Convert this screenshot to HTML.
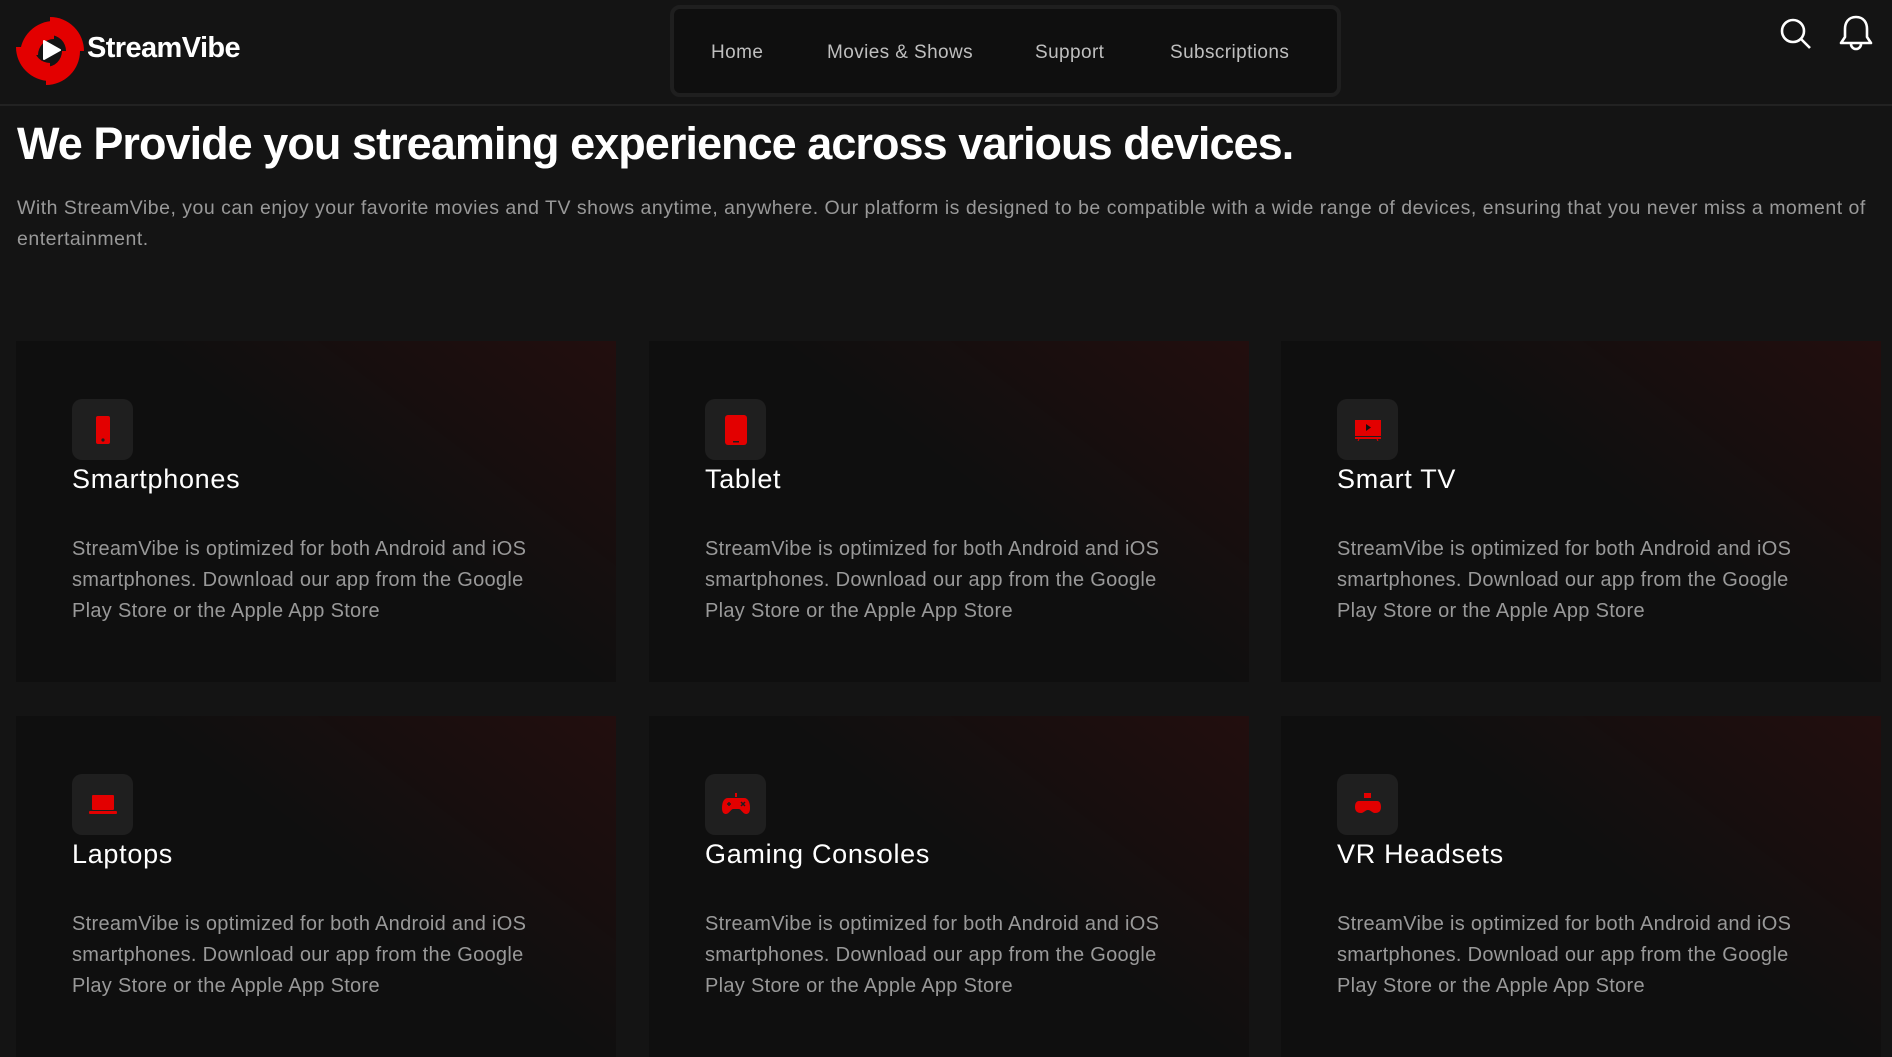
<!DOCTYPE html>
<html><head><meta charset="utf-8"><style>
*{margin:0;padding:0;box-sizing:border-box}
body{width:1892px;height:926px;overflow:hidden;background:#141414;font-family:"Liberation Sans",sans-serif;color:#fff;position:relative}
header{position:absolute;left:0;top:0;width:1892px;height:106px;border-bottom:2px solid #222}
.logo{position:absolute;left:16px;top:17px}
.brand{position:absolute;left:87px;top:32px;font-size:29px;font-weight:bold;letter-spacing:-0.6px}
nav{position:absolute;left:670px;top:5px;width:671px;height:92px;background:#0f0f0f;border:4px solid #1f1f1f;border-radius:10px}
nav span{position:absolute;top:33px;font-size:19px;color:#bfbfbf;letter-spacing:0.4px}
.ic{position:absolute}
h1{position:absolute;left:17px;top:118px;font-size:45px;font-weight:bold;letter-spacing:-0.95px;white-space:nowrap}
p.lead{position:absolute;left:17px;top:193px;width:1872px;font-size:19.5px;line-height:31px;color:#999;letter-spacing:0.5px}
.card{position:absolute;width:600px;height:341px;background:linear-gradient(217deg,rgba(229,0,0,0.09) 0%,rgba(15,15,15,0) 45%),#0f0f0f}
.box{position:absolute;left:56px;top:58px;width:61px;height:61px;background:#1f1f1f;border-radius:10px;display:flex;align-items:center;justify-content:center}
.card h3{position:absolute;left:56px;top:123px;font-size:27px;font-weight:normal;letter-spacing:0.7px}
.card p{position:absolute;left:56px;top:193px;width:490px;font-size:20px;line-height:31px;color:#999;letter-spacing:0.3px}
</style></head><body>
<header>
<svg class="logo" width="68" height="68" viewBox="0 0 68 68">
<path d="M34 0 A34 34 0 0 1 68 34 L50 34 A16 16 0 0 0 34 18 Z" fill="#e30000"/>
<path d="M68 34 A34 34 0 0 1 34 68 L34 50 A16 16 0 0 0 50 34 Z" fill="#e30000" transform="translate(-4,0)"/>
<path d="M34 68 A34 34 0 0 1 0 34 L18 34 A16 16 0 0 0 34 50 Z" fill="#e30000" transform="translate(0,-4)"/>
<path d="M0 34 A34 34 0 0 1 34 0 L34 18 A16 16 0 0 0 18 34 Z" fill="#e30000" transform="translate(4,4)"/>
<path d="M28 24 L44 33 L28 42 Z" fill="#fff" stroke="#fff" stroke-width="2" stroke-linejoin="round"/>
</svg>
<div class="brand">StreamVibe</div>
<nav><span style="left:37px">Home</span><span style="left:153px">Movies &amp; Shows</span><span style="left:361px">Support</span><span style="left:496px">Subscriptions</span></nav>
<svg class="ic" style="left:1778px;top:16px" width="36" height="36" viewBox="0 0 36 36" fill="none" stroke="#fff" stroke-width="2.6"><circle cx="15" cy="15" r="11"/><path d="M23 23 L32 32"/></svg>
<svg class="ic" style="left:1836px;top:13px" width="40" height="40" viewBox="0 0 40 40" fill="none" stroke="#fff" stroke-width="2.6" stroke-linejoin="round"><path d="M20 4 C12 4 9 10 9 16 L9 24 L5 30 L35 30 L31 24 L31 16 C31 10 28 4 20 4 Z"/><path d="M15 31 A5 5 0 0 0 25 31"/></svg>
</header>
<h1>We Provide you streaming experience across various devices.</h1>
<p class="lead">With StreamVibe, you can enjoy your favorite movies and TV shows anytime, anywhere. Our platform is designed to be compatible with a wide range of devices, ensuring that you never miss a moment of entertainment.</p>

<div class="card" style="left:16px;top:341px"><div class="box"><svg width="16" height="28" viewBox="0 0 16 28"><rect x="1" y="0" width="14" height="28" rx="2" fill="#e30000"/><circle cx="8" cy="24" r="1.6" fill="#1f1f1f"/></svg></div><h3>Smartphones</h3><p>StreamVibe is optimized for both Android and iOS smartphones. Download our app from the Google Play Store or the Apple App Store</p></div>
<div class="card" style="left:649px;top:341px"><div class="box"><svg width="24" height="30" viewBox="0 0 24 30"><rect x="1" y="0" width="22" height="30" rx="3" fill="#e30000"/><rect x="9" y="26" width="6" height="1.5" fill="#1f1f1f"/></svg></div><h3>Tablet</h3><p>StreamVibe is optimized for both Android and iOS smartphones. Download our app from the Google Play Store or the Apple App Store</p></div>
<div class="card" style="left:1281px;top:341px"><div class="box"><svg width="28" height="22" viewBox="0 0 28 22"><rect x="1" y="1" width="26" height="16" fill="#e30000"/><path d="M12 5 L17 8.5 L12 12Z" fill="#111"/><rect x="1" y="18" width="26" height="2" fill="#e30000"/><path d="M5 20 L4 22 M23 20 L24 22" stroke="#e30000"/></svg></div><h3>Smart TV</h3><p>StreamVibe is optimized for both Android and iOS smartphones. Download our app from the Google Play Store or the Apple App Store</p></div>

<div class="card" style="left:16px;top:716px"><div class="box"><svg width="30" height="22" viewBox="0 0 30 22"><rect x="4" y="1" width="22" height="15" rx="1" fill="#e30000"/><rect x="1" y="17" width="28" height="3" rx="1" fill="#e30000"/></svg></div><h3>Laptops</h3><p>StreamVibe is optimized for both Android and iOS smartphones. Download our app from the Google Play Store or the Apple App Store</p></div>
<div class="card" style="left:649px;top:716px"><div class="box"><svg width="30" height="24" viewBox="0 0 30 24"><rect x="14" y="0" width="2" height="4" fill="#e30000"/><path d="M7 5 L23 5 C27 5 29 9 29 15 C29 20 27 21 25 21 C22 21 20 16 18 16 L12 16 C10 16 8 21 5 21 C3 21 1 20 1 15 C1 9 3 5 7 5Z" fill="#e30000"/><path d="M6 11 L10 11 M8 9 L8 13" stroke="#1f1f1f" stroke-width="1.5"/><path d="M20 9 L24 13 M24 9 L20 13" stroke="#1f1f1f" stroke-width="1.5"/></svg></div><h3>Gaming Consoles</h3><p>StreamVibe is optimized for both Android and iOS smartphones. Download our app from the Google Play Store or the Apple App Store</p></div>
<div class="card" style="left:1281px;top:716px"><div class="box"><svg width="28" height="24" viewBox="0 0 28 24"><rect x="10" y="0" width="7" height="5" fill="#e30000"/><path d="M5 8 L23 8 C26 8 27 11 27 14 C27 18 25 20 21 20 C18 20 17 17 14 17 C11 17 10 20 7 20 C3 20 1 18 1 14 C1 11 2 8 5 8Z" fill="#e30000"/></svg></div><h3>VR Headsets</h3><p>StreamVibe is optimized for both Android and iOS smartphones. Download our app from the Google Play Store or the Apple App Store</p></div>
</body></html>
